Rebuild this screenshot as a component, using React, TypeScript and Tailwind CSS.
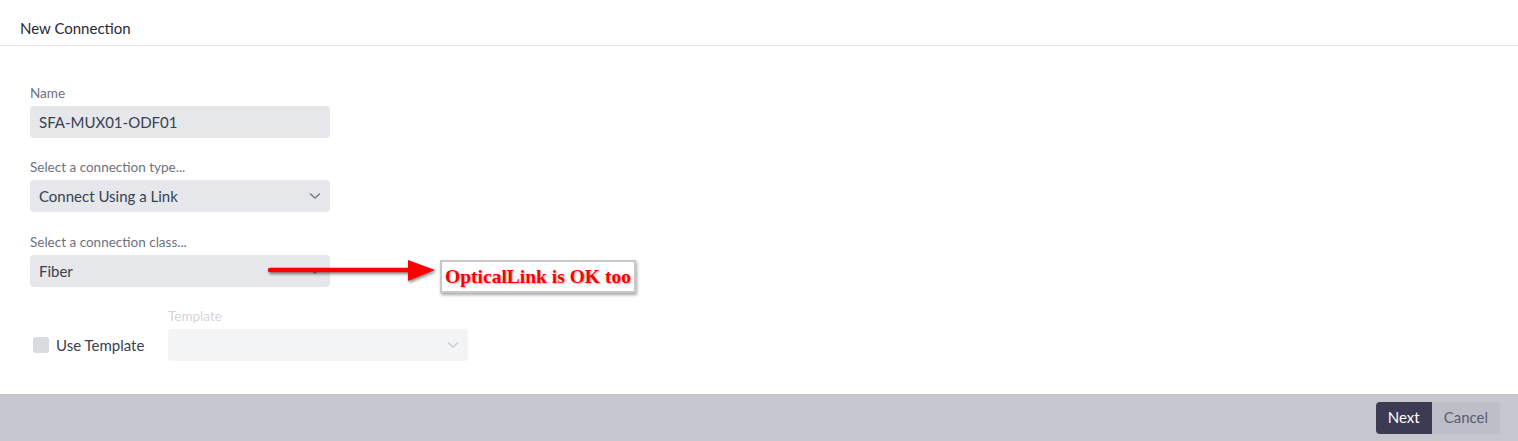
import React from "react";

const Chevron: React.FC<{ className?: string }> = ({ className }) => (
  <svg viewBox="0 0 12 8" className={className} fill="none">
    <polyline points="1.5,2 6,6 10.5,2" stroke="currentColor" strokeWidth="1.3" strokeLinecap="round" strokeLinejoin="round" />
  </svg>
);

const Label: React.FC<{ children: React.ReactNode; muted?: boolean }> = ({ children, muted }) => (
  <div className={`mb-[4px] text-[13.5px] leading-[18px] ${muted ? "text-[#d1d5db]" : "text-[#6b7280]"}`}>{children}</div>
);

const SelectBox: React.FC<{ value: string }> = ({ value }) => (
  <div className="flex h-[32px] w-[300px] items-center justify-between rounded-[4px] bg-[#e5e7eb] pl-[9px] pr-[9px] text-[15px] text-[#374151]">
    <span>{value}</span>
    <Chevron className="h-[8px] w-[12px] text-[#6b7280]" />
  </div>
);

const App: React.FC = () => {
  return (
    <div className="relative flex h-[441px] w-[1518px] flex-col bg-white font-['Lato','Noto_Sans',sans-serif]">
      <header className="border-b border-[#e5e7eb] px-5 pb-[7px] pt-[18px] text-[15px] leading-[20px] text-[#1f2937]">
        New Connection
      </header>

      <main className="flex flex-1 flex-col px-[30px] pt-[38px]">
        <div>
          <Label>Name</Label>
          <div className="flex h-[32px] w-[300px] items-center rounded-[4px] bg-[#e5e7eb] px-[9px] text-[15px] text-[#374151]">
            SFA-MUX01-ODF01
          </div>
        </div>

        <div className="mt-[20px]">
          <Label>Select a connection type...</Label>
          <SelectBox value="Connect Using a Link" />
        </div>

        <div className="mt-[21px]">
          <Label>Select a connection class...</Label>
          <SelectBox value="Fiber" />
        </div>

        <div className="mt-[20px] flex items-end">
          <div className="flex h-[32px] w-[138px] items-center gap-[7px] pl-[3px]">
            <span className="h-[16px] w-[16px] rounded-[3px] bg-[#d8dbe0]" />
            <span className="text-[15px] text-[#374151]">Use Template</span>
          </div>
          <div>
            <Label muted>Template</Label>
            <div className="flex h-[32px] w-[300px] items-center justify-end rounded-[4px] bg-[#f3f4f6] pr-[9px]">
              <Chevron className="h-[8px] w-[12px] text-[#c4c8cf]" />
            </div>
          </div>
        </div>
      </main>

      <footer className="flex h-[47px] items-center justify-end bg-[#c6c6ce] pr-[18px]">
        <button className="h-[32px] rounded-l-[4px] bg-[#3d3a54] px-[12px] text-[15px] text-white">Next</button>
        <button className="h-[32px] rounded-r-[4px] bg-[#bdbec8] px-[12px] text-[15px] text-[#5b5b70]">Cancel</button>
      </footer>

      {/* annotation overlay */}
      <svg
        className="absolute left-[264px] top-[257px] h-[28px] w-[176px] drop-shadow-[1px_2px_1.5px_rgba(0,0,0,0.45)]"
        viewBox="0 0 176 28"
      >
        <line x1="6" y1="13" x2="150" y2="13" stroke="#ff0000" strokeWidth="4.5" strokeLinecap="round" />
        <polygon points="144,3 171,13 144,24" fill="#ff0000" />
      </svg>
      <div className="absolute left-[440px] top-[260px] flex h-[33px] w-[196px] items-center justify-center border-2 border-[#c8c8c8] bg-white shadow-[1px_2px_3px_rgba(0,0,0,0.35)]">
        <span className="font-['Liberation_Serif',serif] text-[19.5px] font-bold text-[#ff0000] [text-shadow:1px_1px_2px_rgba(0,0,0,0.35)]">
          OpticalLink is OK too
        </span>
      </div>
    </div>
  );
};

export default App;
